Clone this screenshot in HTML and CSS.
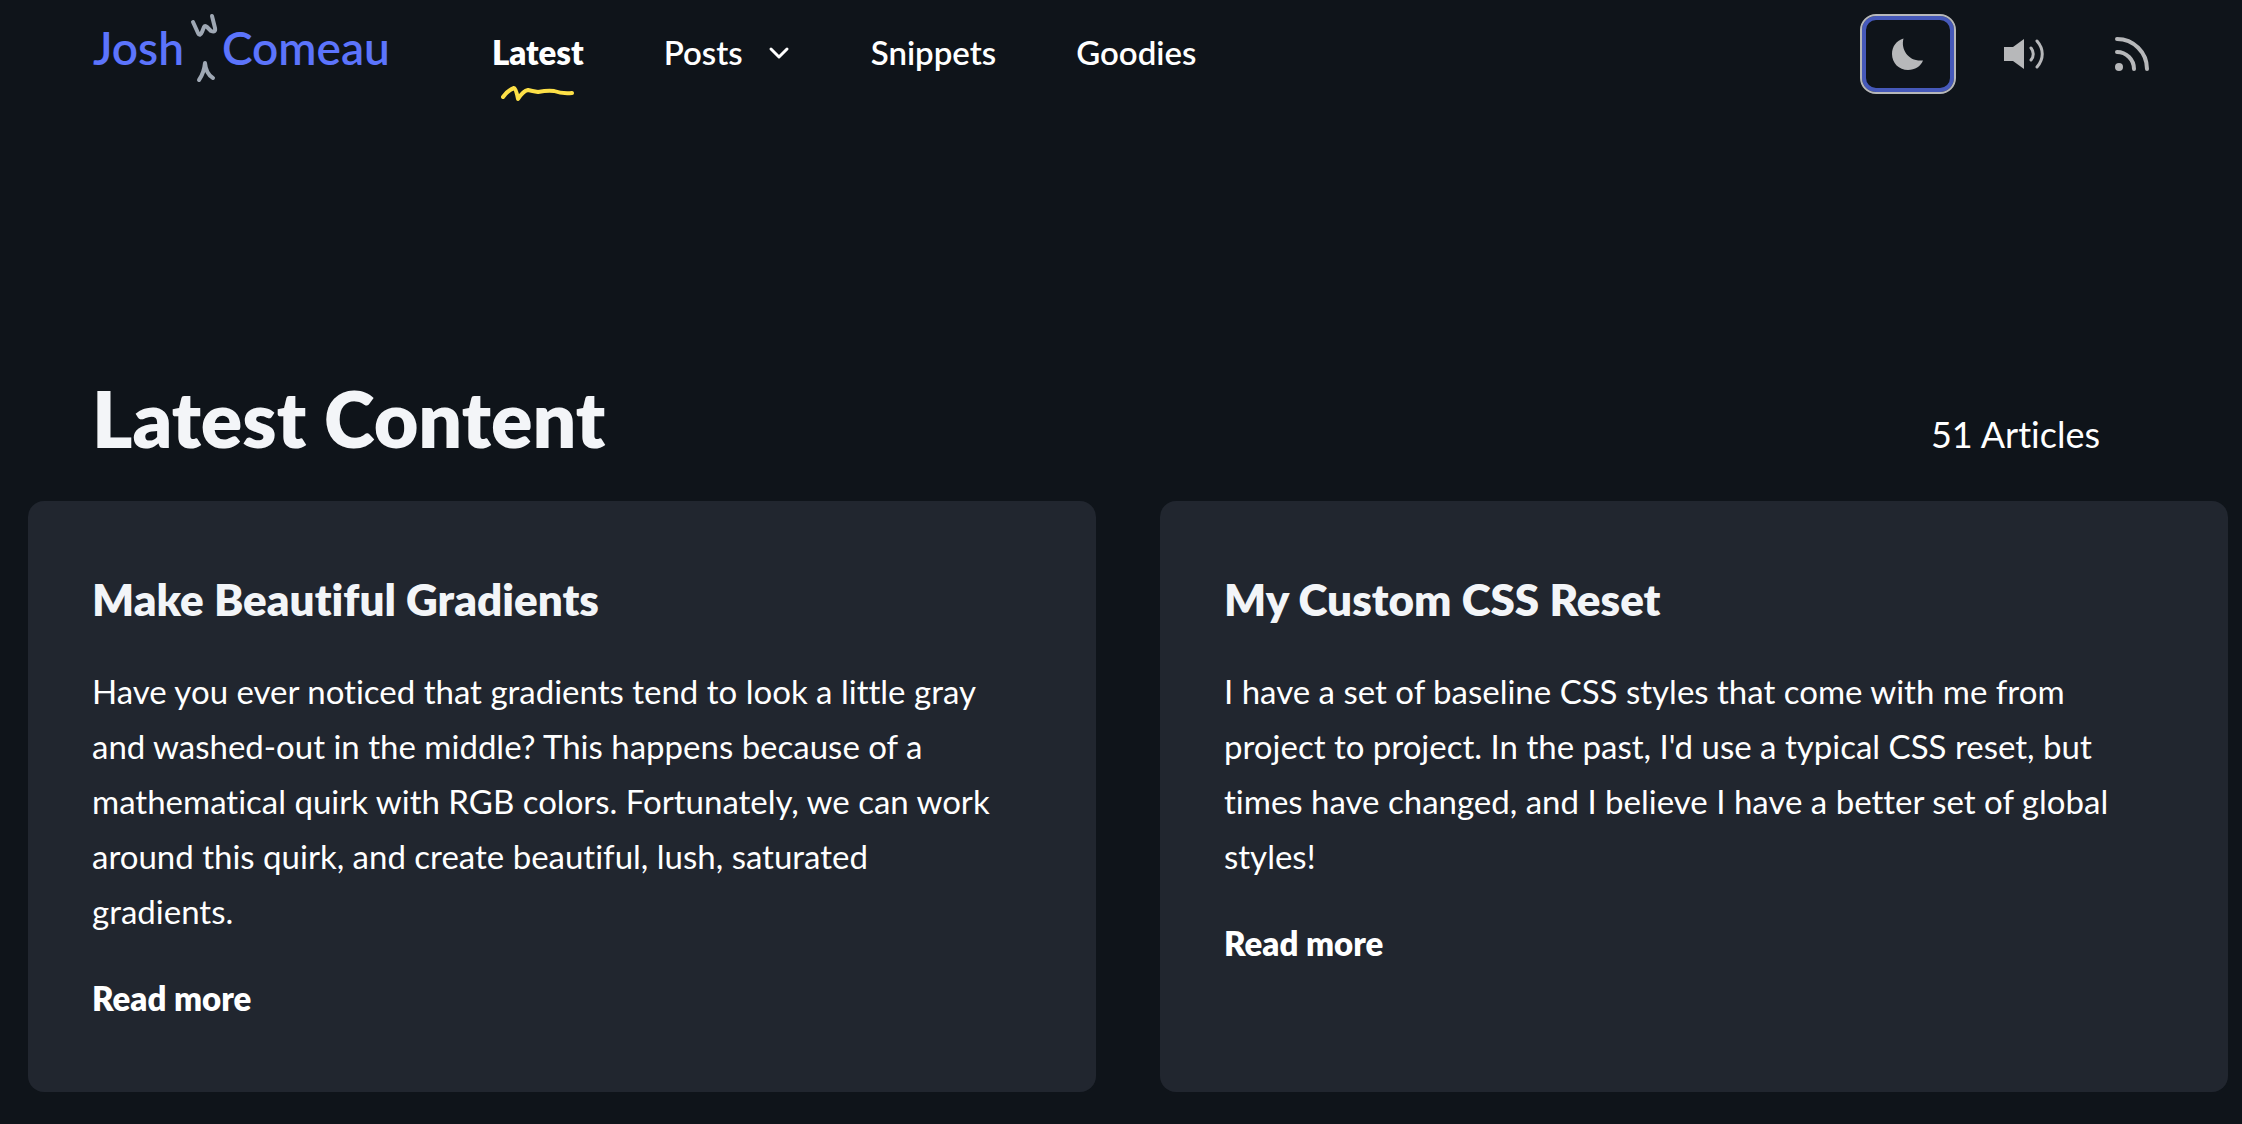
FILE: index.html
```html
<!DOCTYPE html>
<html lang="en">
<head>
  <meta charset="utf-8">
  <meta name="viewport" content="width=device-width, initial-scale=1">
  <title>Josh W Comeau – Latest Content</title>
  <link rel="stylesheet" href="styles.css">
</head>
<body>
  <header class="site-header">
    <a class="logo" href="#">
      <span>Josh</span>
      <svg class="logo-insert" viewBox="0 2 38 72" aria-hidden="true">
        <path d="M9 12 L14 23 Q16 27 18 22 L20 17 Q21 15 23 17 L27 21 Q32 23 31 18 L28 6"/>
        <path d="M15 70 Q20 63 21 53 Q22 64 29 68"/>
      </svg>
      <span>Comeau</span>
    </a>
    <nav class="nav" aria-label="Main">
      <a class="nav-item nav-item--active" href="#" aria-current="page">Latest
        <svg class="squiggle" viewBox="0 0 76 20" aria-hidden="true">
          <path d="M3 15 Q8 8 14 6 Q16 6 18 17 Q23 9 28 8 Q32 9 38 10 Q48 8 54 9 Q62 12 72 11"/>
        </svg>
      </a>
      <button class="nav-item nav-item--menu" type="button">Posts
        <svg class="chevron" viewBox="0 0 24 24" aria-hidden="true"><path d="M4 9 L12 17 L20 9"/></svg>
      </button>
      <a class="nav-item" href="#">Snippets</a>
      <a class="nav-item" href="#">Goodies</a>
    </nav>
    <div class="actions">
      <button class="icon-button icon-button--focused" type="button" aria-label="Toggle dark mode">
        <svg class="icon" viewBox="0 0 40 40" aria-hidden="true">
          <path class="icon-solid" d="M15.500 4.500 C12.500 15.500 20.500 28 35 26.500 C32.500 32.500 27 36 20 36 C11 36 4 29 4 20 C4 12.500 8.500 6.500 15.500 4.500 Z"/>
        </svg>
      </button>
      <button class="icon-button" type="button" aria-label="Toggle sound">
        <svg class="icon icon--sound" viewBox="0 0 48 40" aria-hidden="true">
          <path class="icon-solid" d="M8 13 H17 L28 5 V35 L17 27 H8 Z"/>
          <path class="icon-line icon-line--thin" d="M35 14 C38 17.500 38 22.500 35 26 M41 7 C48 15 48 25 41 33"/>
        </svg>
      </button>
      <a class="icon-button" href="#" aria-label="RSS feed">
        <svg class="icon" viewBox="0 0 40 40" aria-hidden="true">
          <circle class="icon-solid" cx="7" cy="33" r="4"/>
          <path class="icon-line" d="M5 18 A17 17 0 0 1 22 35 M5 5 A30 30 0 0 1 35 35"/>
        </svg>
      </a>
    </div>
  </header>

  <main class="content">
    <div class="content-heading">
      <h1 class="page-title">Latest Content</h1>
      <p class="count">51 Articles</p>
    </div>
    <div class="cards">
      <article class="card">
        <h2 class="card-title">Make Beautiful Gradients</h2>
        <p class="card-text">Have you ever noticed that gradients tend to look a little gray and washed-out in the middle? This happens because of a mathematical quirk with RGB colors. Fortunately, we can work around this quirk, and create beautiful, lush, saturated gradients.</p>
        <a class="read-more" href="#">Read more</a>
      </article>
      <article class="card">
        <h2 class="card-title">My Custom CSS Reset</h2>
        <p class="card-text">I have a set of baseline CSS styles that come with me from project to project. In the past, I'd use a typical CSS reset, but times have changed, and I believe I have a better set of global styles!</p>
        <a class="read-more" href="#">Read more</a>
      </article>
    </div>
  </main>
</body>
</html>
```
FILE: styles.css
```css
*,
*::before,
*::after {
  box-sizing: border-box;
}

body {
  margin: 0;
  background: #0f141a;
  color: #fff;
  font-family: Lato, "Open Sans", sans-serif;
  font-size: 33px;
  font-variant-ligatures: none;
  line-height: 55px;
}

h1,
h2,
p {
  margin: 0;
}

a {
  color: inherit;
  text-decoration: none;
}

button {
  padding: 0;
  border: 0;
  background: none;
  color: inherit;
  font: inherit;
  cursor: pointer;
}

.site-header {
  display: flex;
  align-items: baseline;
  padding: 12px 62px 0 93px;
}

.logo {
  display: flex;
  color: #5c74fc;
  font-size: 46px;
  font-weight: 600;
  line-height: 72px;
}

.logo-insert {
  width: 38px;
  height: 72px;
  fill: none;
  stroke: #9fa8b4;
  stroke-width: 4;
  stroke-linecap: round;
  stroke-linejoin: round;
}

.nav {
  display: flex;
  align-items: baseline;
  gap: 80px;
  margin-left: 102px;
}

.nav-item {
  position: relative;
  font-weight: 600;
  line-height: 40px;
  white-space: nowrap;
}

.nav-item--active {
  font-weight: 800;
}

.nav-item--menu {
  display: flex;
  align-items: center;
  gap: 24px;
}

.squiggle {
  position: absolute;
  top: 50px;
  left: 8px;
  width: 76px;
  height: 20px;
  fill: none;
  stroke: #fde047;
  stroke-width: 4;
  stroke-linecap: round;
  stroke-linejoin: round;
}

.chevron {
  width: 24px;
  height: 24px;
  fill: none;
  stroke: currentColor;
  stroke-width: 3;
  stroke-linecap: round;
  stroke-linejoin: round;
}

.actions {
  display: flex;
  align-self: flex-start;
  gap: 16px;
  margin-top: 2px;
  margin-left: auto;
}

.icon-button {
  display: flex;
  align-items: center;
  justify-content: center;
  width: 96px;
  height: 80px;
  border-radius: 16px;
  color: #b7b8ba;
}

.icon-button--focused {
  border: 2px solid #b7b8ba;
  box-shadow: inset 0 0 0 4px #4659ba;
}

.icon {
  width: 40px;
  height: 40px;
}

.icon--sound {
  width: 48px;
}

.icon-solid {
  fill: currentColor;
}

.icon-line {
  fill: none;
  stroke: currentColor;
  stroke-width: 4;
  stroke-linecap: round;
}

.icon-line--thin {
  stroke-width: 3;
}

.content {
  padding: 277px 14px 32px 28px;
}

.content-heading {
  display: flex;
  align-items: baseline;
  justify-content: space-between;
  padding: 0 128px 36px 64px;
}

.page-title {
  color: #f3f5f8;
  font-size: 77px;
  font-weight: 800;
  line-height: 94px;
}

.count {
  font-size: 36px;
}

.cards {
  display: grid;
  grid-template-columns: 1fr 1fr;
  gap: 64px;
}

.card {
  padding: 65px 80px 66px 64px;
  border-radius: 16px;
  background: #21262f;
}

.card-title {
  color: #f3f5f8;
  font-size: 44px;
  font-weight: 800;
  line-height: 66px;
}

.card-text {
  margin: 32px 0;
}

.read-more {
  display: block;
  font-weight: 800;
}
```
